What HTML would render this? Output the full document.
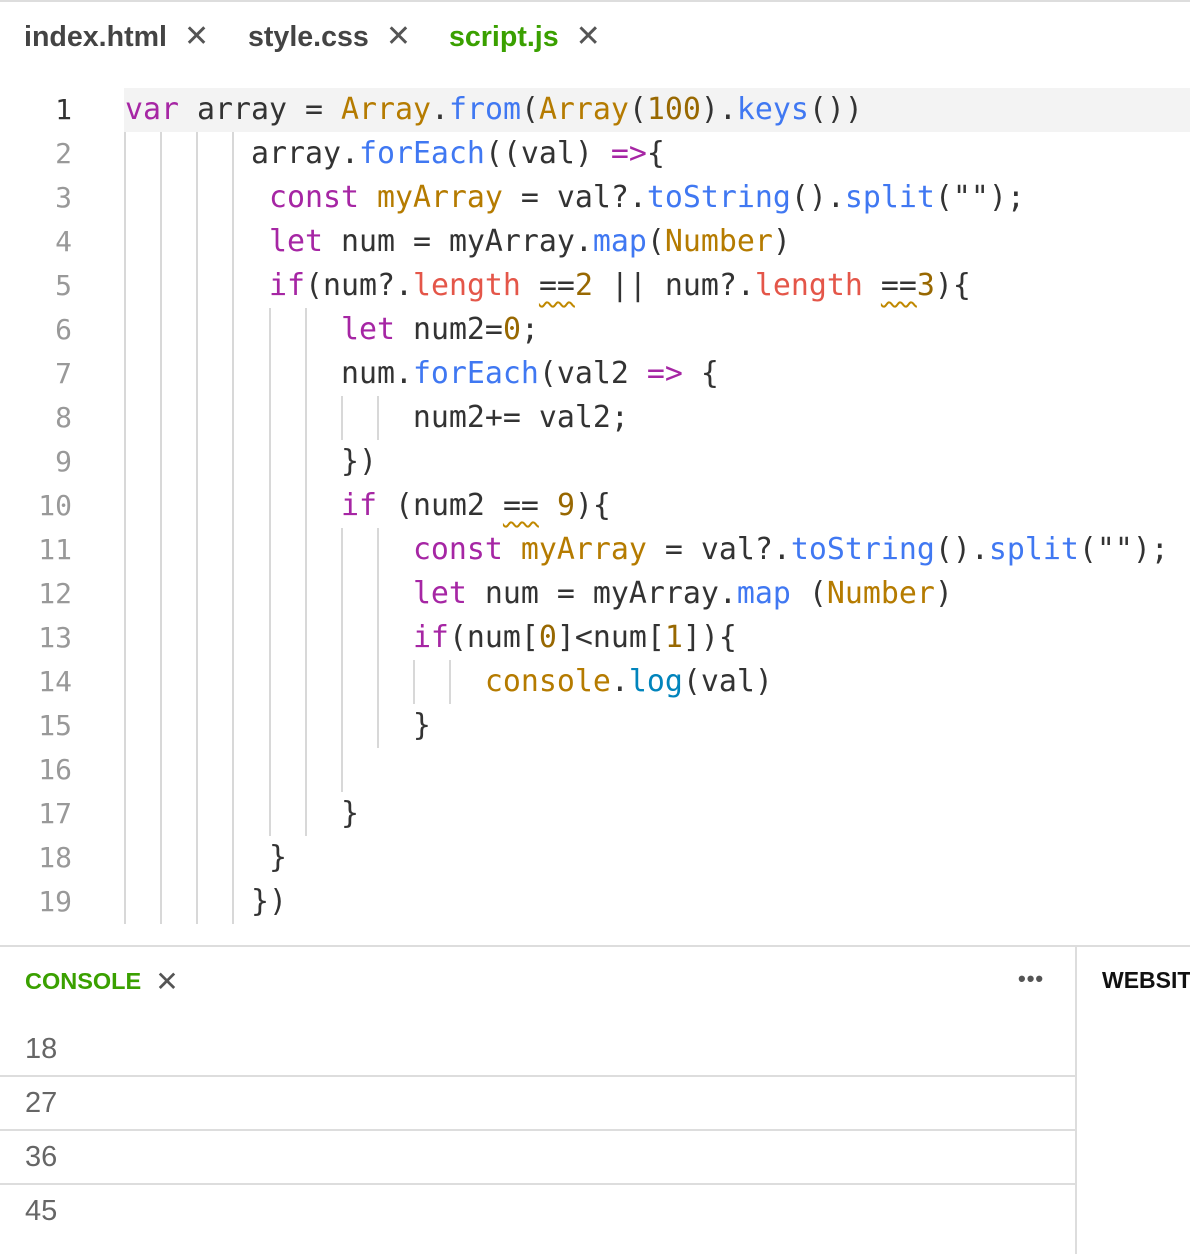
<!DOCTYPE html>
<html><head><meta charset="utf-8"><style>
body{margin:0;width:1190px;height:1254px;background:#fff;position:relative;overflow:hidden;font-family:"Liberation Sans",sans-serif}
.top{position:absolute;left:0;top:0;width:1190px;height:2px;background:#ddd}
.tab{position:absolute;top:19px;font-weight:bold;font-size:28.6px;color:#444;white-space:nowrap}
.x{font-weight:normal;color:#555;margin-left:17px;font-size:30px}
.hl{position:absolute;left:124px;top:88px;width:1066px;height:44px;background:#f3f3f3}
.ln{position:absolute;left:0;width:72px;text-align:right;font-family:"DejaVu Sans Mono",monospace;font-size:28px;color:#999;line-height:44px}
.cl{position:absolute;left:125px;font-family:"DejaVu Sans Mono","Liberation Mono",monospace;font-size:29.9px;color:#333;line-height:44px;white-space:pre}
.g{position:absolute;width:2px;background:#d8d8d8}
.k{color:#a626a4}.o{color:#b57b00}.b{color:#4078f2}.r{color:#e45649}.n{color:#986801}.c{color:#0184bc}
.w{text-decoration:underline wavy #c08800;text-decoration-thickness:1.5px;text-underline-offset:6px}
.hr{position:absolute;left:0;top:945px;width:1190px;height:2px;background:#ddd}
.vr{position:absolute;left:1075px;top:947px;width:2px;height:307px;background:#ddd}
.ct{position:absolute;left:25px;top:963px;font-size:23.5px;font-weight:bold;color:#3aa000}
.ct span{color:#555;font-weight:normal;font-size:28px;margin-left:14px;position:relative;top:2px}
.dots{position:absolute;left:1018px;top:966px;font-size:22px;color:#555;letter-spacing:1px;font-weight:bold}
.web{position:absolute;left:1102px;top:967px;font-size:23px;font-weight:bold;color:#111}
.row{position:absolute;left:25px;font-size:29px;color:#666}
.sep{position:absolute;left:0;width:1075px;height:2px;background:#ddd}
</style></head><body>
<div class="top"></div>
<div class="tab" style="left:24px">index.html<span class="x">✕</span></div>
<div class="tab" style="left:248px">style.css<span class="x">✕</span></div>
<div class="tab" style="left:449px;color:#3aa000">script.js<span class="x" style="color:#555">✕</span></div>
<div class="hl"></div>

<div class="g" style="left:124px;top:132px;height:792px"></div>
<div class="g" style="left:160px;top:132px;height:792px"></div>
<div class="g" style="left:196px;top:132px;height:792px"></div>
<div class="g" style="left:232px;top:132px;height:792px"></div>
<div class="g" style="left:269px;top:308px;height:528px"></div>
<div class="g" style="left:305px;top:308px;height:528px"></div>
<div class="g" style="left:341px;top:396px;height:44px"></div>
<div class="g" style="left:377px;top:396px;height:44px"></div>
<div class="g" style="left:341px;top:528px;height:264px"></div>
<div class="g" style="left:377px;top:528px;height:220px"></div>
<div class="g" style="left:413px;top:660px;height:44px"></div>
<div class="g" style="left:449px;top:660px;height:44px"></div>

<div class="ln" style="top:88px;color:#333">1</div>
<div class="ln" style="top:132px">2</div>
<div class="ln" style="top:176px">3</div>
<div class="ln" style="top:220px">4</div>
<div class="ln" style="top:264px">5</div>
<div class="ln" style="top:308px">6</div>
<div class="ln" style="top:352px">7</div>
<div class="ln" style="top:396px">8</div>
<div class="ln" style="top:440px">9</div>
<div class="ln" style="top:484px">10</div>
<div class="ln" style="top:528px">11</div>
<div class="ln" style="top:572px">12</div>
<div class="ln" style="top:616px">13</div>
<div class="ln" style="top:660px">14</div>
<div class="ln" style="top:704px">15</div>
<div class="ln" style="top:748px">16</div>
<div class="ln" style="top:792px">17</div>
<div class="ln" style="top:836px">18</div>
<div class="ln" style="top:880px">19</div>

<div class="cl" style="top:88px"><span class="k">var</span> array = <span class="o">Array</span>.<span class="b">from</span>(<span class="o">Array</span>(<span class="n">100</span>).<span class="b">keys</span>())</div>
<div class="cl" style="top:132px">       array.<span class="b">forEach</span>((val) <span class="k">=&gt;</span>{</div>
<div class="cl" style="top:176px">        <span class="k">const</span> <span class="o">myArray</span> = val?.<span class="b">toString</span>().<span class="b">split</span>("");</div>
<div class="cl" style="top:220px">        <span class="k">let</span> num = myArray.<span class="b">map</span>(<span class="o">Number</span>)</div>
<div class="cl" style="top:264px">        <span class="k">if</span>(num?.<span class="r">length</span> <span class="w">==</span><span class="n">2</span> || num?.<span class="r">length</span> <span class="w">==</span><span class="n">3</span>){</div>
<div class="cl" style="top:308px">            <span class="k">let</span> num2=<span class="n">0</span>;</div>
<div class="cl" style="top:352px">            num.<span class="b">forEach</span>(val2 <span class="k">=&gt;</span> {</div>
<div class="cl" style="top:396px">                num2+= val2;</div>
<div class="cl" style="top:440px">            })</div>
<div class="cl" style="top:484px">            <span class="k">if</span> (num2 <span class="w">==</span> <span class="n">9</span>){</div>
<div class="cl" style="top:528px">                <span class="k">const</span> <span class="o">myArray</span> = val?.<span class="b">toString</span>().<span class="b">split</span>("");</div>
<div class="cl" style="top:572px">                <span class="k">let</span> num = myArray.<span class="b">map</span> (<span class="o">Number</span>)</div>
<div class="cl" style="top:616px">                <span class="k">if</span>(num[<span class="n">0</span>]&lt;num[<span class="n">1</span>]){</div>
<div class="cl" style="top:660px">                    <span class="o">console</span>.<span class="c">log</span>(val)</div>
<div class="cl" style="top:704px">                }</div>
<div class="cl" style="top:792px">            }</div>
<div class="cl" style="top:836px">        }</div>
<div class="cl" style="top:880px">       })</div>

<div class="hr"></div>
<div class="vr"></div>
<div class="ct">CONSOLE<span>✕</span></div>
<div class="dots">•••</div>
<div class="web">WEBSITE</div>
<div class="row" style="top:1033px">18</div>
<div class="sep" style="top:1075px"></div>
<div class="row" style="top:1087px">27</div>
<div class="sep" style="top:1129px"></div>
<div class="row" style="top:1141px">36</div>
<div class="sep" style="top:1183px"></div>
<div class="row" style="top:1195px">45</div>
</body></html>
